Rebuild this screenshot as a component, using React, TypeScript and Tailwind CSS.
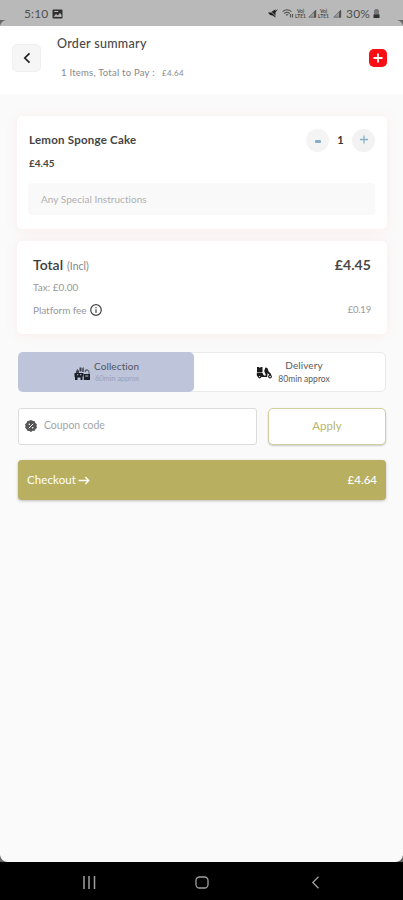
import type { ReactNode } from 'react';

const MuteIcon = () => (
  <svg width="10" height="9" viewBox="0 0 10 9" fill="#222">
    <path d="M0 3.500h2.500L7.500.3v8.200L4.500 6.500 2 6z" />
    <path d="M1 .8l8 7.500" stroke="#b9b9b9" strokeWidth=".8" />
    <path d="M6.500 3.500L9.500.800" stroke="#222" strokeWidth="1" />
  </svg>
);

const WifiIcon = () => (
  <svg width="12" height="9" viewBox="0 0 12 9" fill="none" stroke="#5a5a5a" strokeWidth="1.2">
    <path d="M.6 2.600C3 .4 7 .4 9.400 2.600" />
    <path d="M2.200 4.500c1.600-1.400 4-1.400 5.600 0" />
    <path d="M4 6.200c.7-.6 1.500-.6 2.100 0M8.500 5v3.500M10.500 5v3.500" />
  </svg>
);

const SignalIcon = () => (
  <svg width="9" height="9" viewBox="0 0 9 9">
    <path d="M.8 8.200L7.800 1v7.200z" fill="#999" stroke="#666" strokeWidth=".8" />
    <path d="M6 3v5.500h2V1z" fill="#555" />
  </svg>
);

const VolteLabel = () => (
  <span className="flex w-[11px] flex-col items-center text-[5px] font-bold leading-[5px] text-[#4b4b4b]">
    <span>Vo)</span>
    <span>LTE1</span>
  </span>
);

const StatusBar = () => (
  <div className="relative flex h-[26px] shrink-0 items-center justify-between bg-[#b9b9b9] pl-6 pr-[23px] pt-[1px]">
    <div className="flex items-center gap-1">
      <span className="w-[24px] text-[12px] leading-none tracking-[0.1px] text-[#505050]">5:10</span>
      <svg width="11" height="10" viewBox="0 0 11 10">
        <rect x=".5" y=".5" width="10" height="9" rx="1" fill="#303030" />
        <path d="M1.500 7.800L4 5l1.800 1.500L8 4l1.500 2v2z" fill="#b9b9b9" />
        <path d="M2.200 2h4v1h-4z" fill="#b9b9b9" />
      </svg>
    </div>
    <div className="flex items-center">
      <MuteIcon />
      <span className="ml-[4px]"><WifiIcon /></span>
      <span className="ml-[1px]"><VolteLabel /></span>
      <span className="ml-[2px]"><SignalIcon /></span>
      <span className="ml-[1px]"><VolteLabel /></span>
      <span className="ml-[4px]"><SignalIcon /></span>
      <span className="ml-1 w-[27px] text-[12px] leading-none tracking-[0.2px] text-[#505050]">30%</span>
      <svg width="7" height="9" viewBox="0 0 7 9">
        <path d="M2 0h3v1h1v5H1V1h1z" fill="#777" />
        <path d="M.5 5.500h6V9h-6z" fill="#303030" />
      </svg>
    </div>
    {/* Rounded screen corners */}
    <svg className="absolute bottom-0 left-0" width="6" height="6" viewBox="0 0 6 6">
      <path d="M0 0h6Q1 1 0 6z" fill="#666" />
    </svg>
    <svg className="absolute bottom-0 right-0" width="6" height="6" viewBox="0 0 6 6">
      <path d="M6 0H0q5 1 6 6z" fill="#666" />
    </svg>
  </div>
);

const Header = () => (
  <header className="flex h-[68px] shrink-0 items-start bg-white pl-3 pr-4">
    <button className="mt-[18px] flex h-7 w-[29px] items-center justify-center rounded-[5px] border border-[#f0f0f0] bg-[#f6f6f6]">
      <svg width="8" height="12" viewBox="0 0 8 12" fill="none" stroke="#222" strokeWidth="1.700">
        <path d="M6.500 1.300L1.800 6l4.700 4.700" />
      </svg>
    </button>
    <div className="ml-4 flex flex-col whitespace-nowrap">
      <h1 className="mt-[10px] text-[12.500px] font-medium leading-4 tracking-[0.3px] text-[#484848]">Order summary</h1>
      <p className="ml-1 mt-[15px] flex text-[9.500px] leading-3 text-[#888]">
        <span className="w-[101px] tracking-[0.23px]">1 Items, Total to Pay :</span>
        <span className="text-[8px] tracking-[0.3px]">£4.64</span>
      </p>
    </div>
    <button className="ml-auto mt-[23px] flex h-[18px] w-[18px] items-center justify-center rounded-[5px] bg-[#fb0d15]">
      <svg width="10" height="10" viewBox="0 0 10 10" stroke="#fff" strokeWidth="1.800">
        <path d="M5 .5v9M.5 5h9" />
      </svg>
    </button>
  </header>
);

interface CardProps {
  children: ReactNode;
  className: string;
}

const Card = ({ children, className }: CardProps) => (
  <section className={`rounded-[5px] bg-white shadow-[0_1px_12px_rgba(255,150,140,0.13)] ${className}`}>
    {children}
  </section>
);

const ItemCard = () => (
  <Card className="h-[113px] pl-[12px] pr-[12px] pt-[12px]">
    <div className="flex h-6 items-center justify-between">
      <span className="whitespace-nowrap text-[11.500px] font-bold leading-4 tracking-[0.23px] text-[#444]">Lemon Sponge Cake</span>
      <div className="flex items-center">
        <button className="flex h-[23px] w-[23px] items-center justify-center rounded-full bg-[#f4f4f4]">
          <span className="mt-[3px] h-[3px] w-[6px] rounded-[1px] bg-[#86afc5]" />
        </button>
        <span className="w-[23px] text-center text-[11px] font-bold text-[#333]">1</span>
        <button className="flex h-[23px] w-[23px] items-center justify-center rounded-full bg-[#f2f2f2]">
          <svg width="8" height="10" viewBox="0 0 8 10" stroke="#86afc5" strokeWidth="1.300">
            <path d="M4 .5v8M0 4.500h8" />
          </svg>
        </button>
      </div>
    </div>
    <p className="mt-[5px] text-[10px] font-bold leading-3 text-[#444]">£4.45</p>
    <div className="-ml-px mt-[14px] flex h-8 items-center rounded bg-[#f9f9f9] pl-[13px]">
      <span className="whitespace-nowrap text-[10px] tracking-[0.04px] text-[#b0b0b0]">Any Special Instructions</span>
    </div>
  </Card>
);

const TotalCard = () => (
  <Card className="mt-3 h-[93px] pl-4 pr-4 pt-[13px]">
    <div className="flex h-5 items-center justify-between">
      <span className="flex items-baseline text-[#3c3c3c]">
        <span className="text-[14px] font-semibold">Total</span>
        <span className="ml-1 text-[10.500px] text-[#888]">(Incl)</span>
      </span>
      <span className="text-[14px] font-bold tracking-[0.1px] text-[#484848]">£4.45</span>
    </div>
    <p className="mt-[6px] text-[10px] leading-[14px] text-[#999]">Tax: £0.00</p>
    <div className="mt-[9px] flex h-[14px] items-center justify-between text-[10px] text-[#999]">
      <span className="flex items-center whitespace-nowrap">
        <span className="w-[57px] tracking-[-0.05px]">Platform fee</span>
        <svg width="12" height="12" viewBox="0 0 12 12" fill="none" stroke="#444">
          <circle cx="6" cy="6" r="5.300" strokeWidth="1.200" />
          <path d="M6 5.300V9M6 3v1.200" strokeWidth="1.200" />
        </svg>
      </span>
      <span className="text-[9.500px] tracking-[-0.2px]">£0.19</span>
    </div>
  </Card>
);

const StoreIcon = () => (
  <svg width="17" height="15" viewBox="0 0 17 15" fill="#1d202b">
    <path d="M2 5.500l1.500-2.500L5 5v2H2zM5.500 1.500h2v4h-2zM8.200 2.500l1.500-1.500v5H8.200z" opacity=".8" />
    <path d="M10.500 5.500c0-3 4.500-3 5 .5v2h-1V6c-.4-1.700-2.600-1.500-3 .5z" opacity=".6" />
    <path d="M.5 7H9.500v3.500H8.500V14H6.500v-2.500H3.500V14H1v-3H.5z" />
    <path d="M9.800 8H16v6h-6.200z" />
    <path d="M3 8.300h1.300v1H3zM6 8.300h1.300v1H6zM11.300 9.500h3v1h-3z" fill="#bec4da" />
  </svg>
);

const ScooterIcon = () => (
  <svg width="17" height="13" viewBox="0 0 17 13" fill="#1b1b1b">
    <path d="M1 1h2l.8 1L5 1h1.500v5.500H1z" />
    <path d="M.8 7h5.700l1.500 2.500h2L8.200 5l1.200-3.500 2 .5 1.200 3.500 2 2 .8 1.800h-1.800L11.600 7l-.4 4H2L.8 9.500z" />
    <circle cx="3.700" cy="10.600" r="1.800" />
    <circle cx="14" cy="10.600" r="1.900" />
    <circle cx="3.700" cy="10.600" r=".7" fill="#fff" />
    <circle cx="14" cy="10.600" r=".8" fill="#fff" />
    <path d="M7.200 5.500l1.800 3H7.500L6.700 7z" fill="#fff" />
  </svg>
);

const FulfilmentToggle = () => (
  <div className="ml-px mr-[1px] mt-[18px] flex h-10 rounded-[5px] border border-[#eaeaea] bg-white">
    <button className="-my-px -ml-px flex w-[176px] items-start rounded-[5px] bg-[#bec4da] pl-[56px]">
      <span className="mt-[14px]"><StoreIcon /></span>
      <span className="ml-[3px] mt-[8px] flex flex-col items-start whitespace-nowrap">
        <span className="text-[10px] leading-[13px] tracking-[0.1px] text-[#50545f]">Collection</span>
        <span className="ml-px text-[7.500px] leading-[12px] tracking-[-0.1px] text-[#9aa1b8]">60min approx</span>
      </span>
    </button>
    <button className="flex flex-1 items-start pl-[62px]">
      <span className="mt-[13px]"><ScooterIcon /></span>
      <span className="ml-[4px] mt-[6px] flex w-[54px] flex-col items-center whitespace-nowrap text-[#5a5a5a]">
        <span className="text-[10px] leading-[13px] tracking-[0.1px]">Delivery</span>
        <span className="text-[8.500px] leading-[14px]">80min approx</span>
      </span>
    </button>
  </div>
);

const CouponRow = () => (
  <div className="ml-px mr-[1px] mt-4 flex h-[37px] gap-[11px]">
    <div className="flex w-[239px] items-center rounded-[3px] border border-[#dcdcdc] bg-white pb-[2px] pl-[6px]">
      <svg width="12" height="12" viewBox="0 0 12 12">
        <path d="M6 0l1.700.8 2 .4.7 1.800L12 4.600 11.400 6l.6 1.700-1.400 1.200-.8 1.800-2 .1L6 12l-1.700-1-2-.3-.8-1.800L0 7.600.600 6 0 4.300 1.500 3l.7-1.800 2-.4z" fill="#555" />
        <path d="M8.200 3.800L3.800 8.200" stroke="#fff" />
        <circle cx="4.300" cy="4.300" r=".8" fill="#fff" />
        <circle cx="7.700" cy="7.700" r=".8" fill="#fff" />
      </svg>
      <span className="ml-[7px] whitespace-nowrap text-[10.500px] tracking-[-0.05px] text-[#a5a5a5]">Coupon code</span>
    </div>
    <button className="flex-1 rounded-[5px] border border-[#d3d0a0] bg-white pb-[2px] text-[11.500px] text-[#b9b56f] shadow-[0_1px_2px_rgba(0,0,0,0.2)]">
      Apply
    </button>
  </div>
);

const CheckoutButton = () => (
  <button className="ml-px mr-[1px] mt-[15px] flex h-10 items-center justify-between rounded-[4px] bg-[#b8af60] pl-[9px] pr-[9px] text-white shadow-[0_1px_3px_rgba(0,0,0,0.25)]">
    <span className="flex items-center text-[11.500px]">
      <span className="w-[51px] text-left tracking-[0.1px]">Checkout</span>
      <svg width="12" height="9" viewBox="0 0 12 9" fill="none" stroke="#fff" strokeWidth="1.300">
        <path d="M.5 4.500h10M7.300 1l3.500 3.500L7.300 8" />
      </svg>
    </span>
    <span className="text-[11.500px] font-medium">£4.64</span>
  </button>
);

const NavigationBar = () => (
  <nav className="relative flex h-[38px] shrink-0 items-center bg-black pl-[82px] pt-[2px]">
    <svg width="14" height="13" viewBox="0 0 14 13" stroke="#a0a0a0" strokeWidth="1.500">
      <path d="M2 0v13M7 0v13M12.500 0v13" />
    </svg>
    <svg className="ml-[99px]" width="14" height="13" viewBox="0 0 14 13" fill="none" stroke="#a0a0a0" strokeWidth="1.300">
      <rect x="1" y="1" width="12" height="11" rx="3.500" />
    </svg>
    <svg className="ml-[102px]" width="9" height="13" viewBox="0 0 9 13" fill="none" stroke="#a0a0a0" strokeWidth="1.300">
      <path d="M7.500.8L1.800 6.500l5.700 5.700" />
    </svg>
    <svg className="absolute bottom-full left-0" width="7" height="7" viewBox="0 0 7 7">
      <path d="M0 0q1 6 7 7H0z" fill="#666" />
    </svg>
    <svg className="absolute bottom-full right-0" width="7" height="7" viewBox="0 0 7 7">
      <path d="M7 0Q6 6 0 7h7z" fill="#666" />
    </svg>
  </nav>
);

export default function App() {
  return (
    <div className="flex h-[900px] w-[403px] flex-col overflow-hidden bg-[#fafafa] font-['Lato','Liberation_Sans',sans-serif]">
      <StatusBar />
      <Header />
      <main className="flex flex-1 flex-col pl-[17px] pr-4 pt-[22px]">
        <ItemCard />
        <TotalCard />
        <FulfilmentToggle />
        <CouponRow />
        <CheckoutButton />
      </main>
      <NavigationBar />
    </div>
  );
}
